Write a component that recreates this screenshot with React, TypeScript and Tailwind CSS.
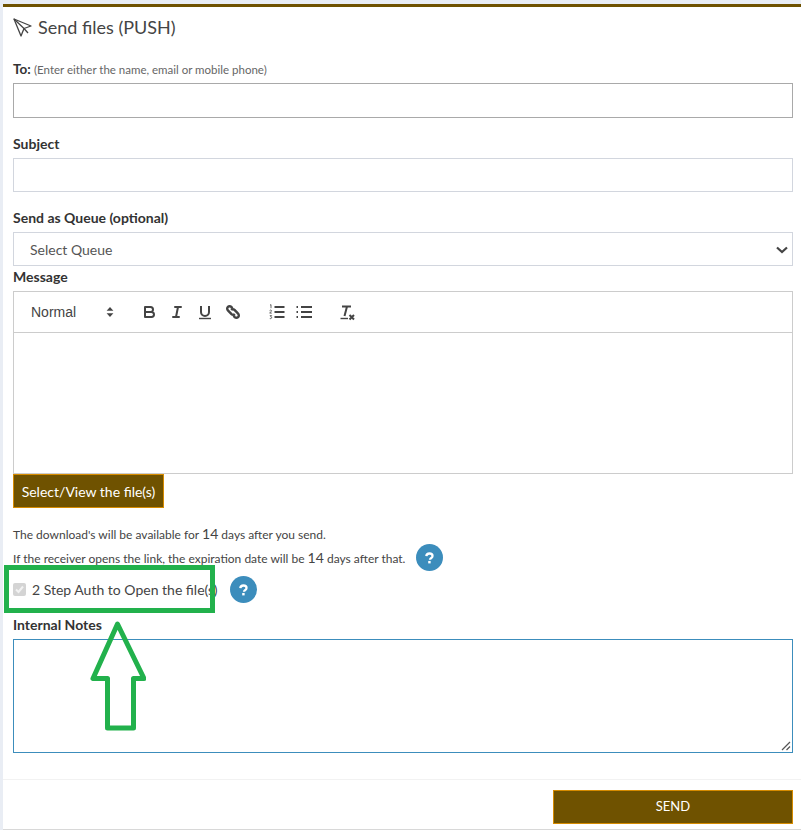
function Help() {
  return (
    <span className="flex h-[27px] w-[27px] shrink-0 items-center justify-center rounded-full bg-[#3c8dbc]">
      <svg width="9" height="12" viewBox="0 0 11 14" fill="none">
        <path d="M1.6 4.6C1.8 2.6 3.3 1.5 5.4 1.5c2.2 0 3.8 1.2 3.8 3 0 1.4-.8 2.1-1.9 2.8-.9.6-1.2 1-1.2 1.9" stroke="#fff" strokeWidth="2.8" />
        <rect x="3.9" y="10.6" width="3" height="3" fill="#fff" />
      </svg>
    </span>
  );
}

function Toolbar() {
  return (
    <div className="flex h-[41px] items-center border-b border-[#cccccc] pl-[17px] text-[#444444]">
      <span className="w-[74px] font-['Liberation_Sans',sans-serif] text-[14px] leading-none text-[#444444]">Normal</span>
      <svg width="10" height="12" viewBox="0 0 10 12" className="mr-[25px]" fill="#444">
        <path d="M5 1 8.4 4.8H1.6ZM5 11 1.6 7.2h6.8Z" />
      </svg>
      <svg width="18" height="18" viewBox="0 0 18 18" fill="none" stroke="#444" strokeWidth="2" className="mr-[10px]">
        <path d="M5 4h5.5a2.5 2.5 0 0 1 0 5H5Zm0 5h6.5a2.5 2.5 0 0 1 0 5H5Z" strokeLinejoin="round" />
      </svg>
      <svg width="18" height="18" viewBox="0 0 18 18" fill="none" stroke="#444" strokeWidth="2" className="mr-[10px]">
        <path d="M7 4h6M5 14h6M8 14l2-10" strokeLinecap="round" />
      </svg>
      <svg width="18" height="18" viewBox="0 0 18 18" fill="none" stroke="#444" strokeWidth="2" className="mr-[10px]">
        <path d="M5 3v6a4 4 0 0 0 8 0V3" />
        <path d="M3 15.5h12" strokeWidth="1.4" />
      </svg>
      <svg width="18" height="18" viewBox="0 0 18 18" fill="none" stroke="#444" strokeWidth="2.4" className="mr-[26px]">
        <path d="M8.5 5.2 7.3 3.9a2.4 2.4 0 0 0-3.4 0 2.4 2.4 0 0 0 0 3.4l3.6 3.8a2.4 2.4 0 0 0 3.4 0" />
        <path d="M9.5 12.8l1.2 1.3a2.4 2.4 0 0 0 3.4 0 2.4 2.4 0 0 0 0-3.4l-3.6-3.8a2.4 2.4 0 0 0-3.4 0" />
      </svg>
      <svg width="18" height="18" viewBox="0 0 18 18" fill="none" stroke="#444" className="mr-[9px]">
        <path d="M6.5 4h10M6.5 9h10M6.5 14h10" strokeWidth="2" />
        <path d="M2 2.2 3 1.6v3.6M1.6 7.6c.6-.8 2-.6 2 .3 0 .7-1.5 1.2-2 2.2h2.2M1.8 12.6h1.8l-.9 1.2c1.4 0 1.4 2.2-.9 1.8" strokeWidth=".8" />
      </svg>
      <svg width="18" height="18" viewBox="0 0 18 18" fill="none" stroke="#444" strokeWidth="2" className="mr-[25px]">
        <path d="M6 4h11M6 9h11M6 14h11M1.5 4h1.5M1.5 9h1.5M1.5 14h1.5" />
      </svg>
      <svg width="18" height="18" viewBox="0 0 18 18" fill="none" stroke="#444" strokeWidth="2">
        <path d="M4 3.5h9M9 3.5 6.5 13" />
        <path d="M2.5 15.5h7.5" strokeWidth="1.4" />
        <path d="M11.5 12l4.5 4.5M16 12l-4.5 4.5" />
      </svg>
    </div>
  );
}

export default function App() {
  return (
    <div className="relative h-[830px] w-[801px] overflow-hidden bg-[#e9edf4] pl-[3px] pt-[4px] font-['Lato',sans-serif] text-[#333333]">
      <div className="flex h-[825px] flex-col border-t-[3px] border-[#6f5200] bg-white">
        <div className="flex h-[38px] items-center pl-[10px] pt-[2px]">
          <svg width="19" height="19" viewBox="0 0 19 19" fill="none" stroke="#444" strokeWidth="1.3" strokeLinejoin="round" className="mr-[6px]">
            <path d="M1 1 18 8l-7 2.5L8 18 1 1Z" />
            <path d="M1 1l10 9.5L15 15" />
          </svg>
          <span className="text-[18px] leading-none text-[#444444]">Send files (PUSH)</span>
        </div>

        <div className="flex flex-1 flex-col pl-[10px] pr-[8px]">
          <div className="mt-[12px] h-[26px] text-[13.5px] font-bold leading-[24px] text-[#333333]">
            To: <span className="text-[11.5px] font-normal text-[#666666]">(Enter either the name, email or mobile phone)</span>
          </div>
          <div className="h-[35px] border border-[#a9a9a9]" />

          <div className="mt-[14px] h-[26px] text-[14px] font-bold leading-[24px]">Subject</div>
          <div className="h-[34px] border border-[#d2d6de]" />

          <div className="mt-[14px] h-[26px] text-[14px] font-bold leading-[24px]">Send as Queue (optional)</div>
          <div className="flex h-[34px] items-center justify-between border border-[#d2d6de] pb-[-1px] pl-[16px] pr-[4px] pt-[1px] text-[14px] text-[#555555]">
            <span>Select Queue</span>
            <svg width="12" height="10" viewBox="0 0 12 10" fill="none" stroke="#444" strokeWidth="2.2">
              <path d="M1 2.5 6 7l5-4.5" />
            </svg>
          </div>

          <div className="h-[25px] text-[14px] font-bold leading-[22px]">Message</div>
          <div className="h-[183px] border border-[#cccccc]">
            <Toolbar />
          </div>

          <div className="flex h-[34px] w-[151px] items-center justify-center border border-[#d68b00] bg-[#6f5200] pt-[1px] text-[14px] text-white">
            Select/View the file(s)
          </div>

          <div className="mt-[18px] h-[17px] text-[12px] leading-[16px] text-[#444444]">
            The download's will be available for <span className="text-[14px]">14</span> days after you send.
          </div>
          <div className="mt-[1px] flex h-[27px] items-center text-[12px] text-[#444444]">
            <span>If the receiver opens the link, the expiration date will be <span className="text-[14px]">14</span> days after that.</span>
            <span className="ml-[11px]"><Help /></span>
          </div>

          <div className="mt-[5px] flex h-[27px] items-center">
            <span className="flex h-[13px] w-[13px] items-center justify-center rounded-[2px] bg-[#d4d4d4]">
              <svg width="11" height="11" viewBox="0 0 11 11" fill="none" stroke="#f2f2f2" strokeWidth="2">
                <path d="M2 5.5 4.5 8 9 2.5" />
              </svg>
            </span>
            <span className="ml-[6px] text-[14px] text-[#444444]">2 Step Auth to Open the file(s)</span>
            <span className="ml-[12px]"><Help /></span>
          </div>

          <div className="mt-[10px] h-[26px] text-[14px] font-bold leading-[24px]">Internal Notes</div>
          <div className="relative h-[114px] border border-[#3c8dbc]">
            <svg width="10" height="10" viewBox="0 0 10 10" className="absolute bottom-[1px] right-[1px]" stroke="#555" strokeWidth="1.2">
              <path d="M1 9 9 1M5.5 9 9 5.5" />
            </svg>
          </div>
        </div>

        <div className="mb-[3px] flex h-[47px] items-end justify-end border-t border-[#f2f2f2] pb-[2px] pr-[8px]">
          <div className="flex h-[34px] w-[240px] items-center justify-center border border-[#d68b00] bg-[#6f5200] text-[13px] text-white">
            SEND
          </div>
        </div>
      </div>
      <div className="h-[1px] bg-[#d8d8d8]" />

      <div className="absolute left-[4px] top-[565px] h-[48px] w-[211px] border-[5px] border-[#22b14c]" />
      <svg width="56" height="112" viewBox="0 0 56 112" fill="none" stroke="#22b14c" strokeWidth="5" strokeLinejoin="round" className="absolute left-[90px] top-[621px]">
        <path d="M27.5 3 3 57.5h14.5V107h26V57.5h10.5Z" />
      </svg>
    </div>
  );
}
